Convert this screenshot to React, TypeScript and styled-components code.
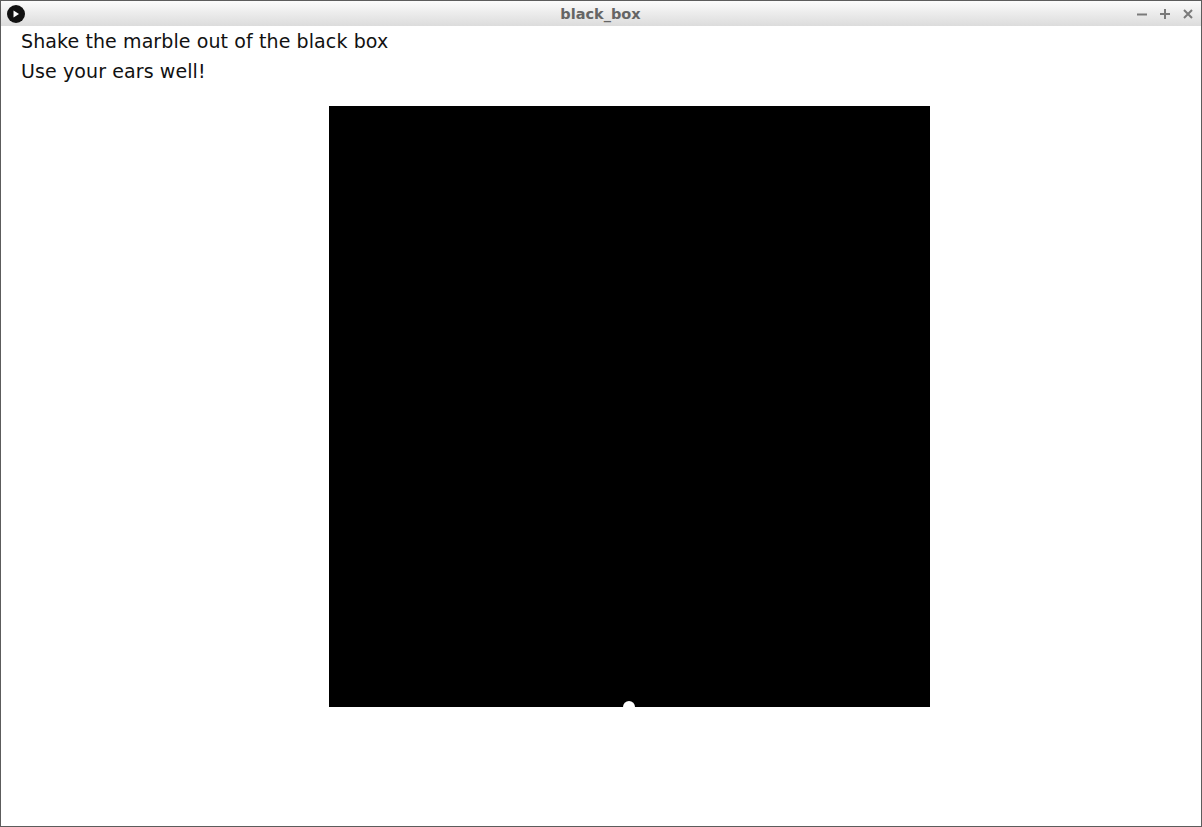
import React from "react";
import styled, { createGlobalStyle } from "styled-components";

const Global = createGlobalStyle`
  html, body { margin: 0; padding: 0; background: #ffffff; }
  body { font-family: "DejaVu Sans", sans-serif; }
`;

const Window = styled.div`
  box-sizing: border-box;
  width: 1202px;
  height: 827px;
  border: 1px solid #5c5c5c;
  display: flex;
  flex-direction: column;
  background: #ffffff;
`;

const TitleBar = styled.div`
  height: 25px;
  flex: none;
  display: grid;
  grid-template-columns: 1fr auto 1fr;
  align-items: center;
  background: linear-gradient(#fbfbfb, #dcdcdc);
  padding: 0 7px 0 6px;
`;

const AppIcon = styled.div`
  width: 18px;
  height: 18px;
  border-radius: 50%;
  background: #111;
  display: flex;
  align-items: center;
  justify-content: center;
  justify-self: start;
`;

const Title = styled.div`
  font-family: "DejaVu Sans", sans-serif;
  font-weight: bold;
  font-size: 14.5px;
  color: #656565;
  padding-top: 1px;
`;

const Controls = styled.div`
  justify-self: end;
  display: flex;
  gap: 11px;
  align-items: center;
`;

const Body = styled.div`
  flex: 1;
  display: flex;
  flex-direction: column;
  padding: 0 0 0 20px;
`;

const Line = styled.div`
  font-family: "DejaVu Sans", sans-serif;
  font-size: 19px;
  letter-spacing: 0.1px;
  line-height: 30px;
  color: #111;
`;

const Box = styled.div`
  position: relative;
  width: 601px;
  height: 601px;
  background: #000;
  margin: 20px 0 0 308px;
  overflow: visible;
`;

const Marble = styled.div`
  position: absolute;
  width: 12px;
  height: 12px;
  border-radius: 50%;
  background: #fff;
`;

export default function App() {
  const marble = { x: 300, y: 601 };
  return (
    <>
      <Global />
      <Window>
        <TitleBar>
          <AppIcon>
            <svg width="8" height="8" viewBox="0 0 8 8">
              <path d="M1.5 0.5 L7 4 L1.5 7.5 Z" fill="#fff" />
            </svg>
          </AppIcon>
          <Title>black_box</Title>
          <Controls>
            <svg width="12" height="12" viewBox="0 0 12 12">
              <path d="M1 6.5 H11" stroke="#7a7a7a" strokeWidth="2" />
            </svg>
            <svg width="12" height="12" viewBox="0 0 12 12">
              <path d="M1 6 H11 M6 1 V11" stroke="#7a7a7a" strokeWidth="2" />
            </svg>
            <svg width="12" height="12" viewBox="0 0 12 12">
              <path d="M2 2 L10 10 M10 2 L2 10" stroke="#7a7a7a" strokeWidth="2" />
            </svg>
          </Controls>
        </TitleBar>
        <Body>
          <Line>Shake the marble out of the black box</Line>
          <Line>Use your ears well!</Line>
          <Box>
            <Marble style={{ left: marble.x - 6, top: marble.y - 6 }} />
          </Box>
        </Body>
      </Window>
    </>
  );
}
